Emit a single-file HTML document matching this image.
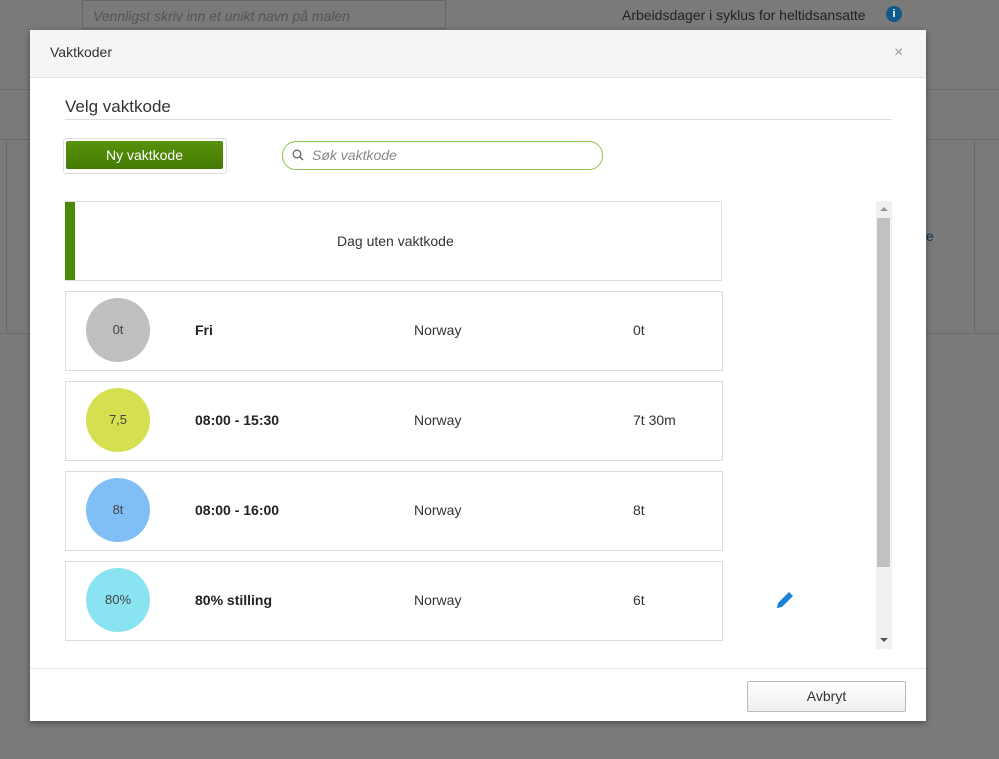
<!DOCTYPE html>
<html><head><meta charset="utf-8"><style>
body{margin:0;width:999px;height:759px;background:#7a7a7a;position:relative;overflow:hidden;font-family:"Liberation Sans",sans-serif;color:#333}
.a{position:absolute}
.row{position:absolute;left:65px;width:656px;height:78px;border:1px solid #ddd;background:#fff;font-size:14px}
.row .c{position:absolute;left:20px;top:6px;width:64px;height:64px;border-radius:50%;text-align:center;line-height:64px;font-size:13px;color:#444}
.row .n{position:absolute;left:129px;top:30px;font-weight:bold;color:#222}
.row .r{position:absolute;left:348px;top:30px}
.row .h{position:absolute;left:567px;top:30px}
</style></head><body>
<div class="a" style="left:82px;top:0;width:364px;height:29px;border:1px solid #666;box-sizing:border-box;font-style:italic;color:#555;font-size:14px;padding:7px 10px">Vennligst skriv inn et unikt navn på malen</div>
<div class="a" style="left:622px;top:7px;font-size:14px;color:#222">Arbeidsdager i syklus for heltidsansatte</div>
<div class="a" style="left:886px;top:6px;width:16px;height:16px;border-radius:50%;background:#0e5a8a;color:#fff;font-size:11px;text-align:center;line-height:16px;font-weight:bold">i</div>
<div class="a" style="left:0;top:89px;width:999px;height:1px;background:#6a6a6a"></div>
<div class="a" style="left:0;top:139px;width:999px;height:1px;background:#6a6a6a"></div>
<div class="a" style="left:0;top:333px;width:999px;height:1px;background:#6a6a6a"></div>
<div class="a" style="left:6px;top:139px;width:1px;height:194px;background:#6a6a6a"></div>
<div class="a" style="left:974px;top:139px;width:1px;height:194px;background:#6a6a6a"></div>
<div class="a" style="left:926px;top:228px;color:#0e3a5a;font-size:14px">e</div>

<div class="a" style="left:30px;top:30px;width:896px;height:691px;background:#fff;box-shadow:0 2px 6px rgba(0,0,0,.4)">
 <div class="a" style="left:0;top:0;width:896px;height:47px;background:#f5f5f5;border-bottom:1px solid #e2e2e2"></div>
 <div class="a" style="left:20px;top:14px;font-size:14px;color:#333">Vaktkoder</div>
 <div class="a" style="left:864px;top:14px;font-size:16px;color:#999">×</div>
 <div class="a" style="left:35px;top:67px;font-size:17px;color:#333">Velg vaktkode</div>
 <div class="a" style="left:35px;top:89px;width:827px;height:1px;background:#ddd"></div>
 <div class="a" style="left:33px;top:108px;width:162px;height:34px;border:1px solid #ddd;border-radius:3px;background:#fff"></div>
 <div class="a" style="left:36px;top:111px;width:157px;height:28px;background:linear-gradient(#58920a,#447a04);color:#fff;font-size:14px;text-align:center;line-height:28px;border-radius:2px">Ny vaktkode</div>
 <div class="a" style="left:252px;top:111px;width:319px;height:27px;border:1px solid #8bc34a;border-radius:14px"></div>
 <svg class="a" style="left:262px;top:119px" width="12" height="12" viewBox="0 0 12 12"><circle cx="5" cy="5" r="3.8" fill="none" stroke="#666" stroke-width="1.3"/><path d="M8 8l3 3" stroke="#666" stroke-width="1.5"/></svg>
 <div class="a" style="left:282px;top:117px;font-style:italic;color:#888;font-size:14px">Søk vaktkode</div>
 <div class="a" style="left:846px;top:171px;width:16px;height:448px;background:#f1f1f1"></div>
 <div class="a" style="left:847px;top:188px;width:13px;height:349px;background:#c1c1c1"></div>
 <div class="a" style="left:850px;top:177px;width:0;height:0;border:4px solid transparent;border-bottom-color:#999;border-top:0"></div>
 <div class="a" style="left:850px;top:608px;width:0;height:0;border:4px solid transparent;border-top-color:#555;border-bottom:0"></div>
 <div class="a" style="left:0;top:638px;width:896px;height:1px;background:#e5e5e5"></div>
 <div class="a" style="left:717px;top:651px;width:157px;height:29px;border:1px solid #bbb;border-radius:2px;background:linear-gradient(#fff,#eee);text-align:center;line-height:29px;font-size:14px;color:#333">Avbryt</div>
</div>

<div class="row" style="top:201px;border-left:0"><div class="a" style="left:0;top:0;width:10px;height:78px;background:#4a8a06"></div><div class="a" style="left:272px;top:31px">Dag uten vaktkode</div></div>
<div class="row" style="top:291px"><div class="c" style="background:#bfbfbf">0t</div><div class="n">Fri</div><div class="r">Norway</div><div class="h">0t</div></div>
<div class="row" style="top:381px"><div class="c" style="background:#d5df4f">7,5</div><div class="n">08:00 - 15:30</div><div class="r">Norway</div><div class="h">7t 30m</div></div>
<div class="row" style="top:471px"><div class="c" style="background:#7fbff5">8t</div><div class="n">08:00 - 16:00</div><div class="r">Norway</div><div class="h">8t</div></div>
<div class="row" style="top:561px"><div class="c" style="background:#8ae3f0">80%</div><div class="n">80% stilling</div><div class="r">Norway</div><div class="h">6t</div></div>
<svg class="a" style="left:775px;top:590px" width="20" height="20" viewBox="0 0 20 20"><path d="M2 18l1-5L14 2l4 4L7 17z" fill="#1a82d6"/><path d="M2 18l1.5-1" stroke="#1a82d6"/></svg>
</body></html>
